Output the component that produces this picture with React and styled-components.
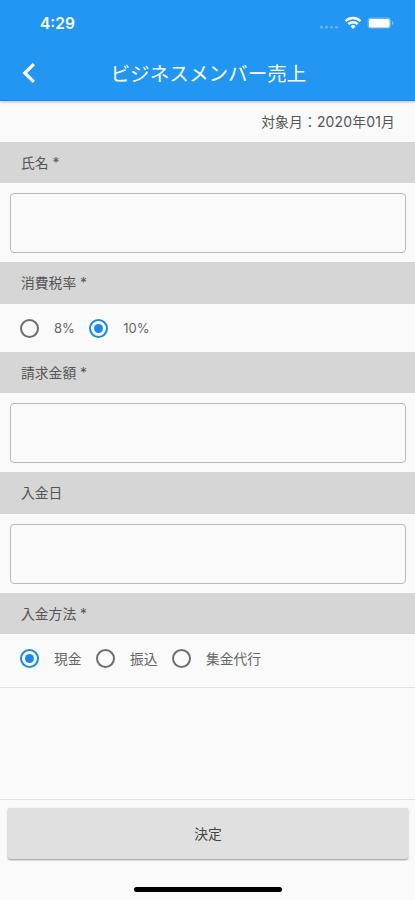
import React from 'react';
import styled, { createGlobalStyle } from 'styled-components';

const GlobalStyle = createGlobalStyle`
  * {
    box-sizing: border-box;
  }

  body {
    margin: 0;
    background-color: #fafafa;
    font-family: Inter, 'Noto Sans CJK JP', sans-serif;
    font-size: 13.8px;
    color: #555;
  }
`;

const Screen = styled.div`
  display: flex;
  flex-direction: column;
  width: 100%;
  height: 900px;
  overflow: hidden;
`;

const Header = styled.header`
  height: 101px;
  flex: none;
  background-color: #2196f3;
  border-bottom: 1px solid #1e88e0;
  box-shadow: 0 1px 3px rgba(0, 0, 0, 0.25);
  color: #fff;
`;

const StatusBar = styled.div`
  display: flex;
  align-items: center;
  justify-content: space-between;
  height: 46px;
  padding: 0 19px 0 40px;
`;

const Clock = styled.span`
  padding-top: 2px;
  font-weight: 600;
  font-size: 15.5px;
  line-height: 20px;
`;

const NavBar = styled.div`
  display: grid;
  grid-template-columns: 57px 1fr 55px;
  align-items: center;
  height: 54px;
`;

const BackButton = styled.button`
  display: flex;
  height: 54px;
  padding: 0 0 0 21px;
  align-items: center;
  border: none;
  background: none;
  color: #fff;
  cursor: pointer;
`;

const Title = styled.h1`
  margin: 0;
  padding-top: 2px;
  font-weight: 400;
  font-size: 19.6px;
  line-height: 28px;
  text-align: center;
  white-space: nowrap;
`;

const TargetMonth = styled.div`
  height: 41px;
  flex: none;
  padding-right: 20px;
  line-height: 42px;
  letter-spacing: 0.15px;
  text-align: right;

  span {
    font-size: 14px;
  }
`;

const Label = styled.div`
  height: ${props => props.height || 41}px;
  flex: none;
  padding-left: 21px;
  background-color: #d6d6d6;
  line-height: 42px;
`;

const Field = styled.div`
  flex: none;
  padding: 10px 9px 9px 10px;
`;

const Input = styled.input`
  display: block;
  width: 100%;
  height: 60px;
  padding: 0 12px;
  border: 1px solid #b9b9b9;
  border-radius: 4px;
  outline: none;
  background: none;
  font: inherit;
`;

const RadioRow = styled.div`
  display: flex;
  flex: none;
  align-items: center;
  height: ${props => (props.$last ? 53 : 48)}px;
  padding-bottom: ${props => (props.$last ? 4 : 0)}px;
  padding-left: 20px;
  gap: 14.4px;
`;

const Option = styled.label`
  display: flex;
  align-items: center;
  gap: 15px;
  font-size: ${props => (props.$numeric ? '13px' : '13.8px')};
  line-height: 20px;
  color: #666;
  cursor: pointer;
`;

const Radio = styled.span`
  display: flex;
  align-items: center;
  justify-content: center;
  width: 19px;
  height: 19px;
  border: 2px solid ${props => (props.$checked ? '#1e88e5' : '#6e6e6e')};
  border-radius: 50%;

  &:after {
    content: '';
    width: 9px;
    height: 9px;
    border-radius: 50%;
    background-color: ${props => (props.$checked ? '#1e88e5' : 'transparent')};
  }
`;

const Divider = styled.div`
  height: 1px;
  flex: none;
  background-color: #e0e0e0;
`;

const Spacer = styled.div`
  flex: 1;
`;

const Footer = styled.footer`
  display: flex;
  flex-direction: column;
  align-items: center;
  flex: none;
  height: 101px;
  padding: 8px 7px 0 8px;
  border-top: 1px solid #e0e0e0;
`;

const SubmitButton = styled.button`
  width: 100%;
  height: 51px;
  padding: 0 0 2px;
  border: none;
  border-radius: 2px;
  background-color: #e0e0e0;
  box-shadow: 0 1px 2px rgba(0, 0, 0, 0.4);
  color: #444;
  font: inherit;
  cursor: pointer;
`;

const HomeIndicator = styled.div`
  width: 148px;
  height: 5px;
  margin-top: 28px;
  border-radius: 3px;
  background-color: #000;
`;

const StatusIcons = () => (
  <svg width="76" height="16" viewBox="0 0 76 16" fill="#fff">
    <g opacity="0.3">
      <rect x="0" y="11" width="3" height="2.5" rx="1" />
      <rect x="5" y="11" width="3" height="2.5" rx="1" />
      <rect x="10" y="11" width="3" height="2.5" rx="1" />
      <rect x="15" y="11" width="3" height="2.5" rx="1" />
    </g>
    <g fill="none" stroke="#fff" strokeWidth="2.4">
      <path d="M25.6 6.1a10.4 10.4 0 0 1 14.8 0" />
      <path d="M28.4 9.1a6.5 6.5 0 0 1 9.2 0" />
    </g>
    <path d="M33 14l-2.6-2.7a3.7 3.7 0 0 1 5.2 0z" />
    <rect x="47.5" y="2.6" width="23.5" height="10.8" rx="3" opacity="0.3" />
    <rect x="49" y="4" width="20.5" height="8.5" rx="1.5" />
    <path d="M72 6v4c1.8-.6 1.8-3.4 0-4z" opacity="0.45" />
  </svg>
);

const BackIcon = () => (
  <svg width="16" height="22" viewBox="0 0 16 22" fill="none" stroke="#fff" strokeWidth="3.2">
    <path d="M12.8 2.2L3.8 11l9 8.8" />
  </svg>
);

class RadioGroup extends React.Component {

  constructor(props) {
    super(props);
    this.state = { value: props.defaultValue };
  }

  render() {
    const { options, last, numeric } = this.props;
    return (
      <RadioRow $last={last}>
        {options.map(option => (
          <Option key={option} $numeric={numeric} onClick={() => this.setState({ value: option })}>
            <Radio $checked={this.state.value === option} />
            {option}
          </Option>
        ))}
      </RadioRow>
    );
  }
}

export default function App() {
  return (
    <Screen>
      <GlobalStyle />
      <Header>
        <StatusBar>
          <Clock>4:29</Clock>
          <StatusIcons />
        </StatusBar>
        <NavBar>
          <BackButton><BackIcon /></BackButton>
          <Title>ビジネスメンバー売上</Title>
        </NavBar>
      </Header>
      <TargetMonth>対象月：<span>2020</span>年<span>01</span>月</TargetMonth>
      <Label>氏名 *</Label>
      <Field><Input /></Field>
      <Label height={42}>消費税率 *</Label>
      <RadioGroup numeric options={['8%', '10%']} defaultValue="10%" />
      <Label>請求金額 *</Label>
      <Field><Input /></Field>
      <Label height={42}>入金日</Label>
      <Field><Input /></Field>
      <Label>入金方法 *</Label>
      <RadioGroup last options={['現金', '振込', '集金代行']} defaultValue="現金" />
      <Divider />
      <Spacer />
      <Footer>
        <SubmitButton>決定</SubmitButton>
        <HomeIndicator />
      </Footer>
    </Screen>
  );
}
